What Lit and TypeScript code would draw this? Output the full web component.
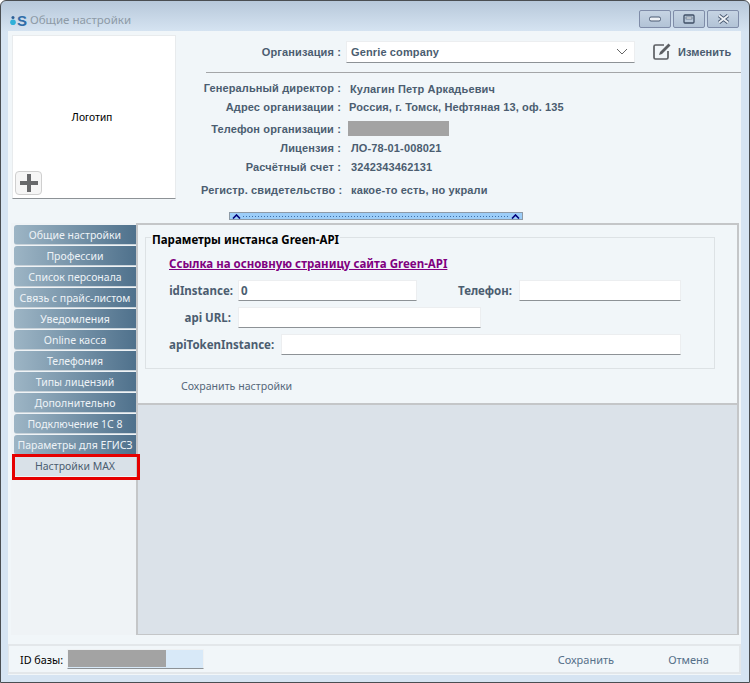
import { LitElement, html, css } from 'lit';
import { customElement } from 'lit/decorators.js';

const INFO = [
  { label: 'Генеральный директор :', value: 'Кулагин Петр Аркадьевич', cls: 'v1' },
  { label: 'Адрес организации :', value: 'Россия, г. Томск, Нефтяная 13, оф. 135', cls: 'v0' },
  { label: 'Телефон организации :', value: '', cls: 'v0' },
  { label: 'Лицензия :', value: 'ЛО-78-01-008021', cls: 'v2' },
  { label: 'Расчётный счет :', value: '3242343462131', cls: 'v2' },
  { label: 'Регистр. свидетельство :', value: 'какое-то есть, но украли', cls: 'v2' },
];

const TABS = [
  'Общие настройки',
  'Профессии',
  'Список персонала',
  'Связь с прайс-листом',
  'Уведомления',
  'Online касса',
  'Телефония',
  'Типы лицензий',
  'Дополнительно',
  'Подключение 1С 8',
  'Параметры для ЕГИСЗ',
];

@customElement('app-root')
export class AppRoot extends LitElement {
  static styles = css`
    :host {
      display: block;
      width: 750px;
      height: 683px;
      font-family: 'Liberation Sans', Arial, sans-serif;
      font-size: 11px;
    }

    .window {
      box-sizing: border-box;
      width: 750px;
      height: 683px;
      display: flex;
      flex-direction: column;
      padding: 0 8px 7px 7px;
      border: 1px solid #4a4e52;
      border-radius: 6px 6px 0 0;
      background: linear-gradient(#b7c8da, #d6e4f2 31px);
    }

    .titlebar {
      height: 30px;
      flex: none;
      display: flex;
      gap: 3px;
      padding: 0 2px 0 2px;
    }

    .app-icon {
      display: flex;
      align-items: center;
      width: 17px;
      height: 14px;
      margin-top: 12px;
    }

    .app-s {
      font: bold 15px 'Liberation Sans', sans-serif;
      color: #2f6da8;
      margin-left: 1px;
    }

    .title {
      flex: 1;
      margin-top: 10px;
      font: 11.5px 'Noto Sans', sans-serif;
      line-height: 18px;
      color: #8d9aa6;
    }

    .win-btns {
      display: flex;
      gap: 2px;
      margin-top: 9px;
    }

    .win-btn {
      box-sizing: border-box;
      width: 32px;
      height: 18px;
      display: flex;
      align-items: center;
      justify-content: center;
      border: 1px solid #7f8ca8;
      border-radius: 2px;
      background: linear-gradient(#c6d4e3, #b2c3d6);
    }

    .content {
      flex: 1;
      min-height: 0;
      display: flex;
      flex-direction: column;
      background: #f1f6f9;
    }

    .top {
      height: 181px;
      flex: none;
      display: flex;
    }

    .logo {
      box-sizing: border-box;
      position: relative;
      width: 164px;
      height: 164px;
      margin: 4px 0 0 4px;
      padding-right: 4px;
      display: flex;
      align-items: center;
      justify-content: center;
      background: #fff;
      border: 1px solid #e8ebed;
      border-bottom-color: #8d9296;
      color: #000;
      font: 11px 'Liberation Sans', sans-serif;
      letter-spacing: 0.1px;
    }

    .add {
      position: absolute;
      left: 2px;
      bottom: 3px;
      box-sizing: border-box;
      width: 27px;
      height: 24px;
      display: flex;
      align-items: center;
      justify-content: center;
      background: #f6f6f6;
      border: 1px solid #cfcfcf;
      border-radius: 4px;
    }

    .details {
      flex: 1;
      margin-left: 25px;
      display: flex;
      flex-direction: column;
      letter-spacing: 0.13px;
    }

    .org {
      height: 42px;
      flex: none;
      margin-left: 5px;
      box-sizing: border-box;
      display: flex;
      align-items: center;
      border-bottom: 1px solid #a4a6a8;
    }

    .label {
      font-weight: bold;
      color: #4b5d70;
      text-align: right;
      white-space: nowrap;
    }

    .org .label {
      width: 135px;
    }

    .combo {
      box-sizing: border-box;
      width: 289px;
      height: 22px;
      margin-left: 5px;
      padding: 0 6px 0 4px;
      display: flex;
      align-items: center;
      justify-content: space-between;
      background: #fff;
      border: 1px solid #eceef0;
      border-bottom-color: #8d9296;
      font-weight: bold;
      color: #4b5d70;
    }

    .edit {
      display: flex;
      align-items: center;
      gap: 7px;
      margin-left: 18px;
      font-weight: bold;
      color: #4b5d70;
      letter-spacing: 0.05px;
    }

    .info {
      display: grid;
      grid-template-columns: 140px 1fr;
      grid-template-rows: 20px 18px 25px 14px 24px 22px;
      padding-top: 5px;
      align-items: center;
    }

    .info .value {
      font-weight: bold;
      color: #4b5d70;
      white-space: nowrap;
    }

    .v0 { padding-left: 8px; }
    .v1 { padding: 2px 0 0 9px; }
    .v2 { padding-left: 10px; }

    .redact {
      display: block;
      width: 101px;
      height: 15px;
      margin-left: -1px;
      background: #a3a3a3;
    }

    .splitter {
      box-sizing: border-box;
      flex: none;
      width: 294px;
      height: 8px;
      margin: 0 0 3px 221px;
      padding: 0 2px;
      display: flex;
      align-items: center;
      justify-content: space-between;
      gap: 2px;
      border: 1px solid #8e9aa6;
      background: #9ccdf8;
    }

    .dots {
      flex: 1;
      height: 1px;
      background: repeating-linear-gradient(90deg, #3c6fa8 0 1px, transparent 1px 3px);
    }

    .main {
      flex: 1;
      min-height: 0;
      display: flex;
      margin: 0 2px 9px 3px;
    }

    .tabs {
      position: relative;
      box-sizing: border-box;
      width: 125px;
      flex: none;
      padding: 2px 0 0 3px;
      display: flex;
      flex-direction: column;
      gap: 1px;
      background: #eff3f6;
    }

    .tab {
      box-sizing: border-box;
      height: 20px;
      flex: none;
      display: flex;
      align-items: center;
      justify-content: center;
      border-radius: 3px 0 0 3px;
      border-bottom: 1px solid #c9d3da;
      background: linear-gradient(90deg, #9db5c5, #4f718c);
      color: #eef3f7;
      font: 10.5px 'Noto Sans', sans-serif;
      white-space: nowrap;
    }

    .tab.sel {
      background: #d9e1e8;
      border-bottom: 0;
      color: #4b5d70;
    }

    .mark {
      position: absolute;
      left: 1px;
      top: 231px;
      box-sizing: border-box;
      width: 128px;
      height: 26px;
      border: 3px solid #e60000;
      z-index: 1;
    }

    .pane {
      flex: 1;
      display: flex;
      flex-direction: column;
      background: #dbe2e9;
      border: 2px solid #c4c6c8;
      border-width: 2px 2px 1px 2px;
    }

    .settings {
      box-sizing: border-box;
      height: 180px;
      flex: none;
      padding: 3px 0 0 7px;
      background: #f1f6f9;
      border-bottom: 2px solid #c4c6c8;
    }

    fieldset {
      box-sizing: border-box;
      width: 570px;
      height: 141px;
      margin: 0;
      padding: 0 0 0 23px;
      border: 1px solid #dde2e5;
    }

    legend {
      margin-left: -18px;
      padding: 4px 1px 0;
      font: bold 11.5px 'Noto Sans', sans-serif;
      line-height: 15px;
      color: #000;
    }

    a {
      display: block;
      margin-top: 9px;
      font: bold 11.5px 'Noto Sans', sans-serif;
      line-height: 15px;
      color: #800080;
    }

    .form {
      display: flex;
      flex-direction: column;
      gap: 6px;
      margin-top: 9px;
    }

    .row {
      display: flex;
      align-items: center;
      height: 21px;
    }

    .row .label {
      font: bold 11.5px 'Noto Sans', sans-serif;
      color: #4b5d70;
    }

    .field {
      box-sizing: border-box;
      height: 21px;
      padding: 0 2px;
      display: flex;
      align-items: center;
      background: #fff;
      border: 1px solid #eceef0;
      border-bottom-color: #8d9296;
      font: bold 11.5px 'Noto Sans', sans-serif;
      color: #4b5d70;
    }

    .save-settings {
      margin: 10px 0 0 36px;
      font: 10.6px 'Noto Sans', sans-serif;
      line-height: 15px;
      color: #55677a;
    }

    .footer {
      box-sizing: border-box;
      height: 30px;
      flex: none;
      margin-bottom: 1px;
      display: flex;
      align-items: center;
      border: 2px solid #e3e7ea;
      border-width: 2px 2px 2px 1px;
      padding-left: 11px;
    }

    .id-label {
      font: 10.8px 'Noto Sans', sans-serif;
      color: #000;
      width: 47px;
    }

    .id-field {
      box-sizing: border-box;
      width: 137px;
      height: 20px;
      background: #d8e9f8;
      border: 1px solid #eef1f3;
      border-bottom-color: #8d9296;
    }

    .id-fill {
      width: 98px;
      height: 17px;
      background: #a3a3a3;
    }

    .act {
      font: 11px 'Noto Sans', sans-serif;
      color: #567089;
    }

    .act.save {
      margin-left: auto;
    }

    .act.cancel {
      margin: 0 30px 0 54px;
    }
  `;

  render() {
    return html`
      <div class="window">
        <div class="titlebar">
          <span class="app-icon">
            <svg width="7" height="11" viewBox="0 0 7 11">
              <circle cx="3.5" cy="2" r="1.8" fill="#2c5f96"></circle>
              <circle cx="3.5" cy="7.5" r="3.3" fill="#2fb0d8"></circle>
            </svg>
            <span class="app-s">S</span>
          </span>
          <span class="title">Общие настройки</span>
          <div class="win-btns">
            <div class="win-btn">
              <svg width="12" height="6" viewBox="0 0 12 6">
                <rect x="0.5" y="1" width="11" height="4" rx="1.5" fill="#eef2f6" stroke="#4a5a72"></rect>
              </svg>
            </div>
            <div class="win-btn">
              <svg width="12" height="10" viewBox="0 0 12 10">
                <rect x="1" y="1" width="10" height="8" rx="1" fill="none" stroke="#3f4f66" stroke-width="1.3"></rect>
                <rect x="3" y="3" width="6" height="2" fill="#eef2f6" stroke="#3f4f66" stroke-width="0.6"></rect>
              </svg>
            </div>
            <div class="win-btn">
              <svg width="13" height="10" viewBox="0 0 13 10">
                <path d="M2 1.5 L11 8.5 M11 1.5 L2 8.5" stroke="#4a5a72" stroke-width="3.6"></path>
                <path d="M2 1.5 L11 8.5 M11 1.5 L2 8.5" stroke="#eef2f6" stroke-width="1.8"></path>
              </svg>
            </div>
          </div>
        </div>

        <div class="content">
          <div class="top">
            <div class="logo">
              Логотип
              <div class="add">
                <svg width="18" height="18" viewBox="0 0 18 18">
                  <path d="M9 0 V18 M0 9 H18" stroke="#68696b" stroke-width="4"></path>
                </svg>
              </div>
            </div>
            <div class="details">
              <div class="org">
                <span class="label">Организация :</span>
                <div class="combo">
                  <span>Genrie company</span>
                  <svg width="12" height="7" viewBox="0 0 12 7">
                    <path d="M1 1 L6 6 L11 1" fill="none" stroke="#666"></path>
                  </svg>
                </div>
                <div class="edit">
                  <svg width="18" height="17" viewBox="0 0 18 17">
                    <path d="M11 2 H2.5 Q1 2 1 3.5 V14.5 Q1 16 2.5 16 H13.5 Q15 16 15 14.5 V8" fill="none" stroke="#5c5f63" stroke-width="1.7"></path>
                    <path d="M6 12 L7 9 L15.5 0.5 L17.5 2.5 L9 11 Z" fill="#5c5f63"></path>
                  </svg>
                  <span>Изменить</span>
                </div>
              </div>
              <div class="info">
                ${INFO.map(
                  row => html`
                    <div class="label">${row.label}</div>
                    <div class="value ${row.cls}">
                      ${row.value || html`<span class="redact"></span>`}
                    </div>
                  `,
                )}
              </div>
            </div>
          </div>

          <div class="splitter">
            <svg width="9" height="5" viewBox="0 0 9 5">
              <path d="M1 4.5 L4.5 1 L8 4.5" fill="none" stroke="#00007a" stroke-width="1.6"></path>
            </svg>
            <div class="dots"></div>
            <svg width="9" height="5" viewBox="0 0 9 5">
              <path d="M1 4.5 L4.5 1 L8 4.5" fill="none" stroke="#00007a" stroke-width="1.6"></path>
            </svg>
          </div>

          <div class="main">
            <div class="tabs">
              ${TABS.map(tab => html`<div class="tab">${tab}</div>`)}
              <div class="tab sel">Настройки MAX</div>
              <div class="mark"></div>
            </div>
            <div class="pane">
              <div class="settings">
                <fieldset>
                  <legend>Параметры инстанса Green-API</legend>
                  <a href="#">Ссылка на основную страницу сайта Green-API</a>
                  <div class="form">
                    <div class="row">
                      <span class="label" style="width:64px">idInstance:</span>
                      <div class="field" style="width:179px;margin-left:5px">0</div>
                      <span class="label" style="width:95px">Телефон:</span>
                      <div class="field" style="width:162px;margin-left:7px"></div>
                    </div>
                    <div class="row">
                      <span class="label" style="width:62px">api URL:</span>
                      <div class="field" style="width:243px;margin-left:7px"></div>
                    </div>
                    <div class="row">
                      <span class="label" style="width:105px">apiTokenInstance:</span>
                      <div class="field" style="width:400px;margin-left:7px"></div>
                    </div>
                  </div>
                </fieldset>
                <div class="save-settings">Сохранить настройки</div>
              </div>
            </div>
          </div>

          <div class="footer">
            <span class="id-label">ID базы:</span>
            <div class="id-field"><div class="id-fill"></div></div>
            <span class="act save">Сохранить</span>
            <span class="act cancel">Отмена</span>
          </div>
        </div>
      </div>
    `;
  }
}
